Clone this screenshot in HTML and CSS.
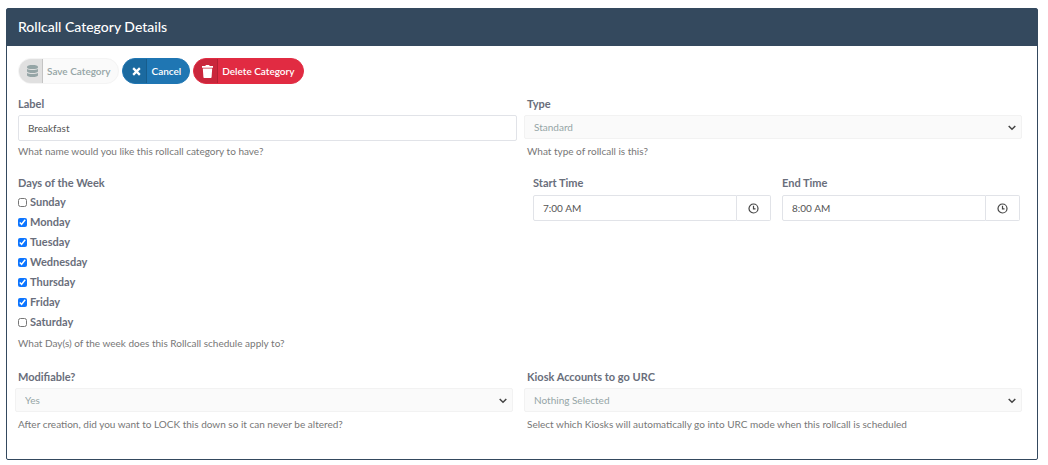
FILE: index.html
```
<!DOCTYPE html>
<html lang="en">
<head>
    <meta charset="UTF-8">
    <meta name="viewport" content="width=device-width, initial-scale=1.0">
    <title>Rollcall Category Details</title>
    <link rel="stylesheet" href="styles.css">
</head>
<body>
    <main class="panel">
        <header class="panel-header">
            <h1>Rollcall Category Details</h1>
        </header>

        <form class="panel-body">
            <!-- Actions -->
            <div class="toolbar">
                <button type="submit" class="btn btn-save" disabled>
                    <span class="btn-icon">
                        <svg width="11" height="12" viewBox="0 0 11 12" fill="currentColor">
                            <path d="M0 1.6C0 .7 2.4 0 5.500 0S11 .7 11 1.600v.8C11 3.300 8.600 4 5.500 4S0 3.300 0 2.400z"/>
                            <path d="M0 4c1.200.7 3.200 1 5.500 1S9.800 4.700 11 4v2.200C11 7.200 8.600 8 5.500 8S0 7.200 0 6.200z"/>
                            <path d="M0 8c1.200.7 3.200 1 5.500 1S9.800 8.700 11 8v2.200c0 1-2.400 1.800-5.500 1.800S0 11.200 0 10.200z"/>
                        </svg>
                    </span>
                    <span class="btn-text">Save Category</span>
                </button>
                <button type="button" class="btn btn-cancel">
                    <span class="btn-icon">
                        <svg width="9" height="9" viewBox="0 0 10 10" fill="none" stroke="currentColor" stroke-width="2.500">
                            <path d="M1.300 1.300l7.400 7.400M8.700 1.300L1.300 8.700"/>
                        </svg>
                    </span>
                    <span class="btn-text">Cancel</span>
                </button>
                <button type="button" class="btn btn-delete">
                    <span class="btn-icon">
                        <svg width="11" height="13" viewBox="0 0 11 13" fill="currentColor">
                            <path d="M0 1h3.300l.6-1h3.200l.6 1H11v1.800H0z"/>
                            <path d="M.8 3.600h9.400l-.6 8.300c0 .6-.5 1.100-1.100 1.100h-6c-.6 0-1.100-.5-1.100-1.100z"/>
                        </svg>
                    </span>
                    <span class="btn-text">Delete Category</span>
                </button>
            </div>

            <div class="form-grid">
                <div class="field">
                    <label for="label">Label</label>
                    <input type="text" id="label" class="text-input" value="Breakfast">
                    <p class="help">What name would you like this rollcall category to have?</p>
                </div>

                <div class="field">
                    <label for="type">Type</label>
                    <div class="select-wrap">
                        <select id="type" disabled>
                            <option>Standard</option>
                        </select>
                        <svg class="chevron" width="8" height="6" viewBox="0 0 8 6"><path d="M.7 1L4 4.300 7.300 1"/></svg>
                    </div>
                    <p class="help">What type of rollcall is this?</p>
                </div>

                <!-- Schedule -->
                <fieldset class="field days">
                    <legend>Days of the Week</legend>
                    <label><input type="checkbox" name="days" value="0">Sunday</label>
                    <label><input type="checkbox" name="days" value="1" checked>Monday</label>
                    <label><input type="checkbox" name="days" value="2" checked>Tuesday</label>
                    <label><input type="checkbox" name="days" value="3" checked>Wednesday</label>
                    <label><input type="checkbox" name="days" value="4" checked>Thursday</label>
                    <label><input type="checkbox" name="days" value="5" checked>Friday</label>
                    <label><input type="checkbox" name="days" value="6">Saturday</label>
                    <p class="help">What Day(s) of the week does this Rollcall schedule apply to?</p>
                </fieldset>

                <div class="times">
                    <div class="field">
                        <label for="start-time">Start Time</label>
                        <div class="time-group">
                            <input type="text" id="start-time" class="text-input" value="7:00 AM">
                            <button type="button" class="time-btn" aria-label="Pick start time">
                                <svg width="11" height="11" viewBox="0 0 11 11"><circle cx="5.500" cy="5.500" r="4.500"/><path d="M5.500 2.800v3h2"/></svg>
                            </button>
                        </div>
                    </div>
                    <div class="field">
                        <label for="end-time">End Time</label>
                        <div class="time-group">
                            <input type="text" id="end-time" class="text-input" value="8:00 AM">
                            <button type="button" class="time-btn" aria-label="Pick end time">
                                <svg width="11" height="11" viewBox="0 0 11 11"><circle cx="5.500" cy="5.500" r="4.500"/><path d="M5.500 2.800v3h2"/></svg>
                            </button>
                        </div>
                    </div>
                </div>

                <div class="field">
                    <label for="modifiable">Modifiable?</label>
                    <div class="select-wrap">
                        <select id="modifiable" disabled>
                            <option>Yes</option>
                        </select>
                        <svg class="chevron" width="8" height="6" viewBox="0 0 8 6"><path d="M.7 1L4 4.300 7.300 1"/></svg>
                    </div>
                    <p class="help">After creation, did you want to LOCK this down so it can never be altered?</p>
                </div>

                <div class="field">
                    <label for="kiosks">Kiosk Accounts to go URC</label>
                    <div class="select-wrap">
                        <select id="kiosks" disabled>
                            <option>Nothing Selected</option>
                        </select>
                        <svg class="chevron" width="8" height="6" viewBox="0 0 8 6"><path d="M.7 1L4 4.300 7.300 1"/></svg>
                    </div>
                    <p class="help">Select which Kiosks will automatically go into URC mode when this rollcall is scheduled</p>
                </div>
            </div>
        </form>
    </main>
</body>
</html>
```
FILE: styles.css
```
* {
    box-sizing: border-box;
}
body {
    margin: 0;
    padding: 8px 10px 0 6px;
    background-color: #fff;
    color: #696e7b;
    font-family: Lato, sans-serif;
    font-size: 10px;
}
button, input, select {
    font-family: inherit;
    font-size: 10px;
}

/* Panel */
.panel {
    border: 1px solid #34495e;
    border-radius: 2px;
}
.panel-header {
    padding: 8px 11px 9px;
    background-color: #34495e;
}
.panel-header h1 {
    margin: 0;
    color: #fff;
    font-size: 14px;
    font-weight: 500;
    line-height: 20px;
}
.panel-body {
    padding: 12px 11px 28px;
}

/* Buttons */
.toolbar {
    display: flex;
    gap: 3px;
    margin-bottom: 12px;
}
.btn {
    display: flex;
    height: 26px;
    padding: 0;
    border: 1px solid transparent;
    border-radius: 13px;
    color: #fff;
    font-weight: 600;
    overflow: hidden;
    cursor: pointer;
}
.btn-icon {
    display: flex;
    align-items: center;
    justify-content: center;
    width: 24px;
    padding-left: 4px;
    background-color: rgba(0, 0, 0, 0.1);
    border-right: 1px solid rgba(0, 0, 0, 0.12);
}
.btn-text {
    padding: 0 8px 0 4px;
    line-height: 24px;
}
.btn-save {
    background-color: #fafafa;
    border-color: #f4f4f4;
    color: #95a5a6;
    cursor: default;
}
.btn-cancel {
    background-color: #1f76b3;
    border-color: #1f76b3;
}
.btn-delete {
    background-color: #e12b42;
    border-color: #e12b42;
}

/* Form */
.form-grid {
    display: grid;
    grid-template-columns: 1fr 1fr;
    gap: 17px 10px;
}
.field {
    min-width: 0;
}
.field label, .days legend {
    display: block;
    padding: 0;
    font-size: 11px;
    font-weight: bold;
    line-height: 16px;
}
.text-input {
    display: block;
    width: 100%;
    height: 26px;
    margin-top: 3px;
    padding: 0 9px;
    border: 1px solid #e1e3e8;
    border-radius: 2px;
    background-color: #fff;
    color: #555;
}
.help {
    margin: 3px 0 0;
    color: #777;
    line-height: 14px;
}

/* Drop-downs */
.select-wrap {
    position: relative;
    height: 26px;
    margin: 3px 4px 0 -3px;
}
.select-wrap select {
    appearance: none;
    display: block;
    width: 100%;
    height: 24px;
    padding: 0 24px 0 9px;
    border: 1px solid #f2f2f2;
    border-radius: 2px;
    background-color: #fafafa;
    color: #95a5a6;
    opacity: 1;
}
.chevron {
    position: absolute;
    top: 10px;
    right: 6px;
    fill: none;
    stroke: #444;
    stroke-width: 1.5;
    pointer-events: none;
}

/* Days of the week */
.days {
    margin: 0;
    padding: 0 0 2px;
    border: 0;
}
.days legend {
    margin-bottom: 1px;
}
.days label {
    display: flex;
    align-items: center;
    gap: 3px;
    line-height: 20px;
}
.days input {
    width: 9px;
    height: 9px;
    margin: 0;
    accent-color: #0d75ff;
}
.days .help {
    margin-top: 4px;
}

/* Times */
.times {
    display: grid;
    grid-template-columns: 1fr 1fr;
    gap: 11px;
    padding: 0 6px;
}
.time-group {
    display: flex;
    margin-top: 4px;
}
.time-group .text-input {
    flex: 1;
    min-width: 0;
    margin: 0;
    border-radius: 2px 0 0 2px;
}
.time-btn {
    display: flex;
    align-items: center;
    justify-content: center;
    width: 34px;
    height: 26px;
    padding: 0;
    border: 1px solid #e1e3e8;
    border-left: 0;
    border-radius: 0 2px 2px 0;
    background-color: #fff;
    cursor: pointer;
}
.time-btn svg {
    fill: none;
    stroke: #444;
    stroke-width: 1.2;
}
```
